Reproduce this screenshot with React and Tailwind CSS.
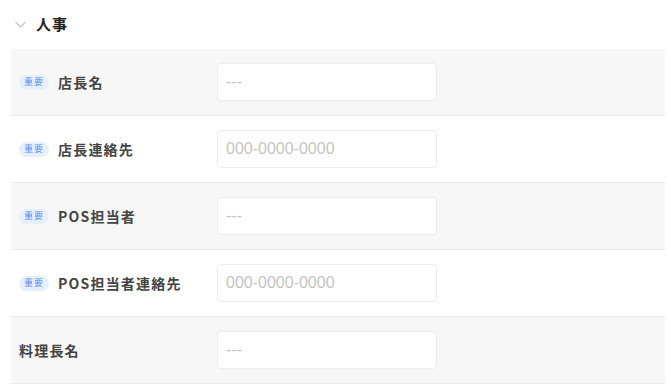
import React from "react";

const rows = [
  { label: "店長名", important: true, placeholder: "---", shaded: true },
  { label: "店長連絡先", important: true, placeholder: "000-0000-0000", shaded: false },
  { label: "POS担当者", important: true, placeholder: "---", shaded: true },
  { label: "POS担当者連絡先", important: true, placeholder: "000-0000-0000", shaded: false },
  { label: "料理長名", important: false, placeholder: "---", shaded: true },
];

function Row({ row }) {
  return (
    <div
      className={
        "flex items-center pl-2 py-[14px] border-b border-[#ebebeb] " +
        (row.shaded ? "bg-[#f7f7f7]" : "bg-white")
      }
    >
      <div className="w-[198px] flex items-center gap-[9px]">
        {row.important && (
          <span className="inline-flex items-center justify-center w-[30px] h-[15px] rounded-full bg-[#e6f0fd] text-[#5a8ef0] text-[9px] tracking-[1px]">
            重要
          </span>
        )}
        <span className="text-[14px] font-semibold text-[#444] tracking-[1.2px]">{row.label}</span>
      </div>
      <input
        className="w-[220px] h-[38px] rounded-[4px] border border-[#ececec] bg-white px-2 text-[16px] text-[#333] placeholder:text-[#c4c4c4] outline-none"
        style={{ fontFamily: '"Liberation Sans", Arial, sans-serif' }}
        placeholder={row.placeholder}
      />
    </div>
  );
}

export default function App() {
  return (
    <div
      className="w-[670px] h-[387px] bg-white overflow-hidden"
      style={{ fontFamily: '"Noto Sans CJK JP", "Noto Sans", sans-serif' }}
    >
      <div className="h-[49px] flex items-center pl-[15px] gap-[10px]">
        <svg width="11" height="7" viewBox="0 0 11 7" fill="none" stroke="#999" strokeWidth="1">
          <path d="M0.5 1l5 5 5-5" />
        </svg>
        <span className="text-[15px] font-bold text-[#222] tracking-[1px]">人事</span>
      </div>
      <div className="ml-[11px] w-[654px]">
        {rows.map((r) => (
          <Row key={r.label} row={r} />
        ))}
      </div>
    </div>
  );
}
